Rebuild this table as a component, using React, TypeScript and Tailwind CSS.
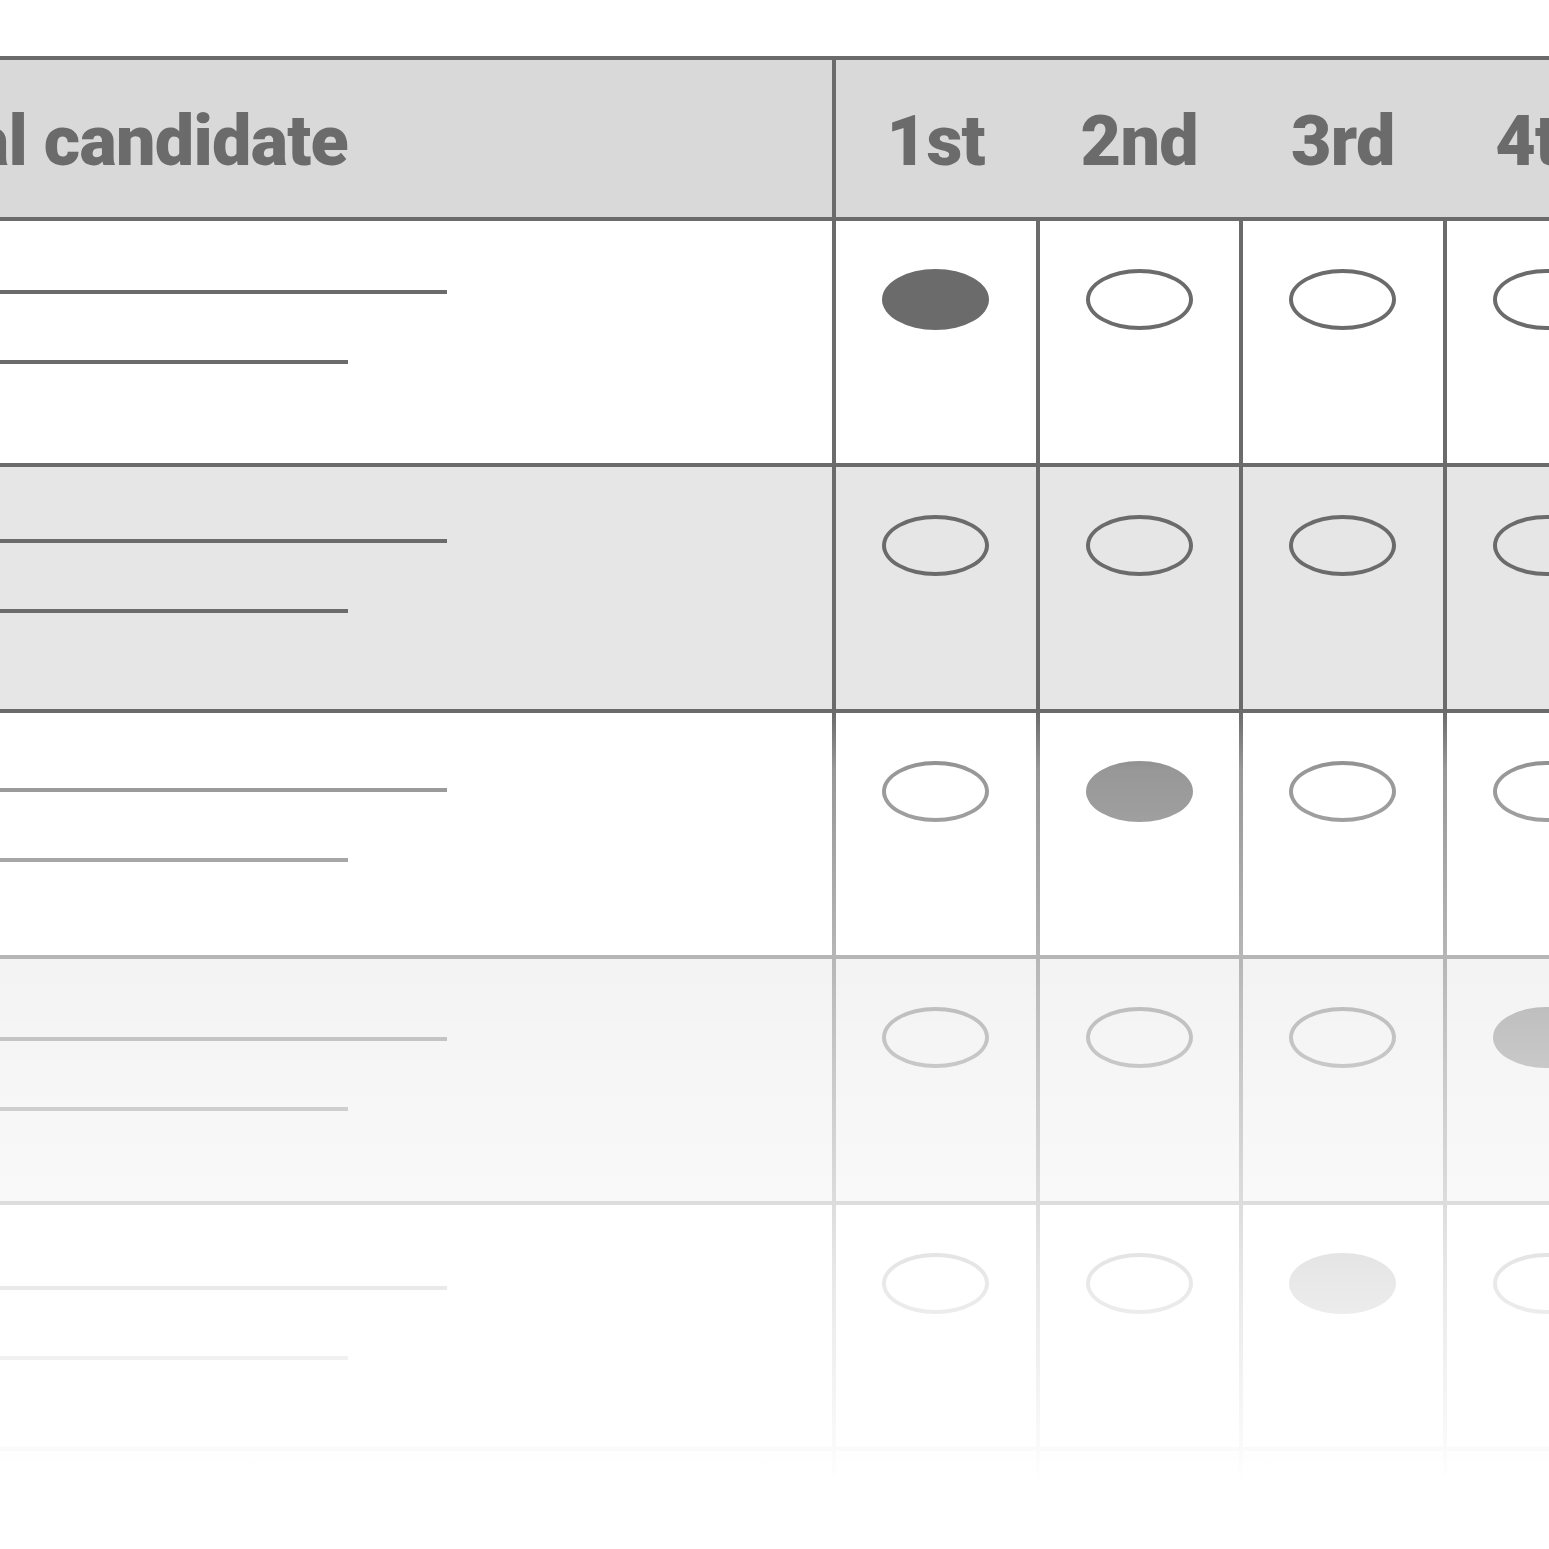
import React from "react";

const RANKS = ["1st", "2nd", "3rd", "4th", "5th"];

// one entry per ballot row; "marked" is the rank bubble that is filled in
const ROWS = [
  { marked: 0, bg: "bg-white", pad: "pt-[69px]" },
  { marked: 4, bg: "bg-[#e6e6e6]", pad: "pt-[72px]" },
  { marked: 1, bg: "bg-white", pad: "pt-[75px]" },
  { marked: 3, bg: "bg-[#e6e6e6]", pad: "pt-[78px]" },
  { marked: 2, bg: "bg-white", pad: "pt-[81px]" },
  { marked: 0, bg: "bg-[#e6e6e6]", pad: "pt-[84px]" },
];

const Bubble: React.FC<{ filled: boolean }> = ({ filled }) =>
  filled ? (
    <div className="h-[61px] w-[107px] rounded-[50%] bg-[#6b6b6b]" />
  ) : (
    <div className="h-[61px] w-[107px] rounded-[50%] border-4 border-[#6b6b6b]" />
  );

export default function App() {
  return (
    <div className="relative h-[1549px] w-full overflow-hidden bg-white font-['Roboto','Liberation_Sans',sans-serif] text-[#6b6b6b]">
      <div className="w-[1850px] pt-[56px]">
        {/* header */}
        <div className="flex h-[165px] border-y-4 border-[#6b6b6b] bg-[#d9d9d9] text-[70px] font-black leading-[82px] tracking-[-0.7px]">
          <div className="w-[832px] shrink-0">
            <div className="flex w-[348px] justify-end pt-[40px]">
              <span className="whitespace-nowrap">Mayoral candidate</span>
            </div>
          </div>
          {RANKS.map((rank, i) => (
            <div
              key={rank}
              className={
                i === 0
                  ? "w-[203.5px] shrink-0 border-l-4 border-[#6b6b6b] pt-[40px] text-center"
                  : "w-[203.5px] shrink-0 border-l-4 border-transparent pt-[40px] text-center"
              }
            >
              {rank}
            </div>
          ))}
        </div>

        {/* candidate rows */}
        {ROWS.map((row, r) => (
          <div key={r} className={`flex h-[246px] border-b-4 border-[#6b6b6b] ${row.bg}`}>
            <div className={`w-[832px] shrink-0 ${row.pad}`}>
              <div className="h-[4px] w-[447px] bg-[#6b6b6b]" />
              <div className="mt-[66px] h-[4px] w-[348px] bg-[#6b6b6b]" />
            </div>
            {RANKS.map((rank, i) => (
              <div
                key={rank}
                className="flex w-[203.5px] shrink-0 justify-center border-l-4 border-[#6b6b6b] pt-[48px]"
              >
                <Bubble filled={row.marked === i} />
              </div>
            ))}
          </div>
        ))}
      </div>

      {/* fade to white toward the bottom */}
      <div className="pointer-events-none absolute inset-0 bg-[linear-gradient(to_bottom,rgba(255,255,255,0)_0px,rgba(255,255,255,0)_712px,rgba(255,255,255,0.3)_770px,rgba(255,255,255,0.34)_810px,rgba(255,255,255,0.6)_1038px,rgba(255,255,255,0.85)_1284px,rgba(255,255,255,0.97)_1450px,rgba(255,255,255,1)_1480px)]" />
    </div>
  );
}
